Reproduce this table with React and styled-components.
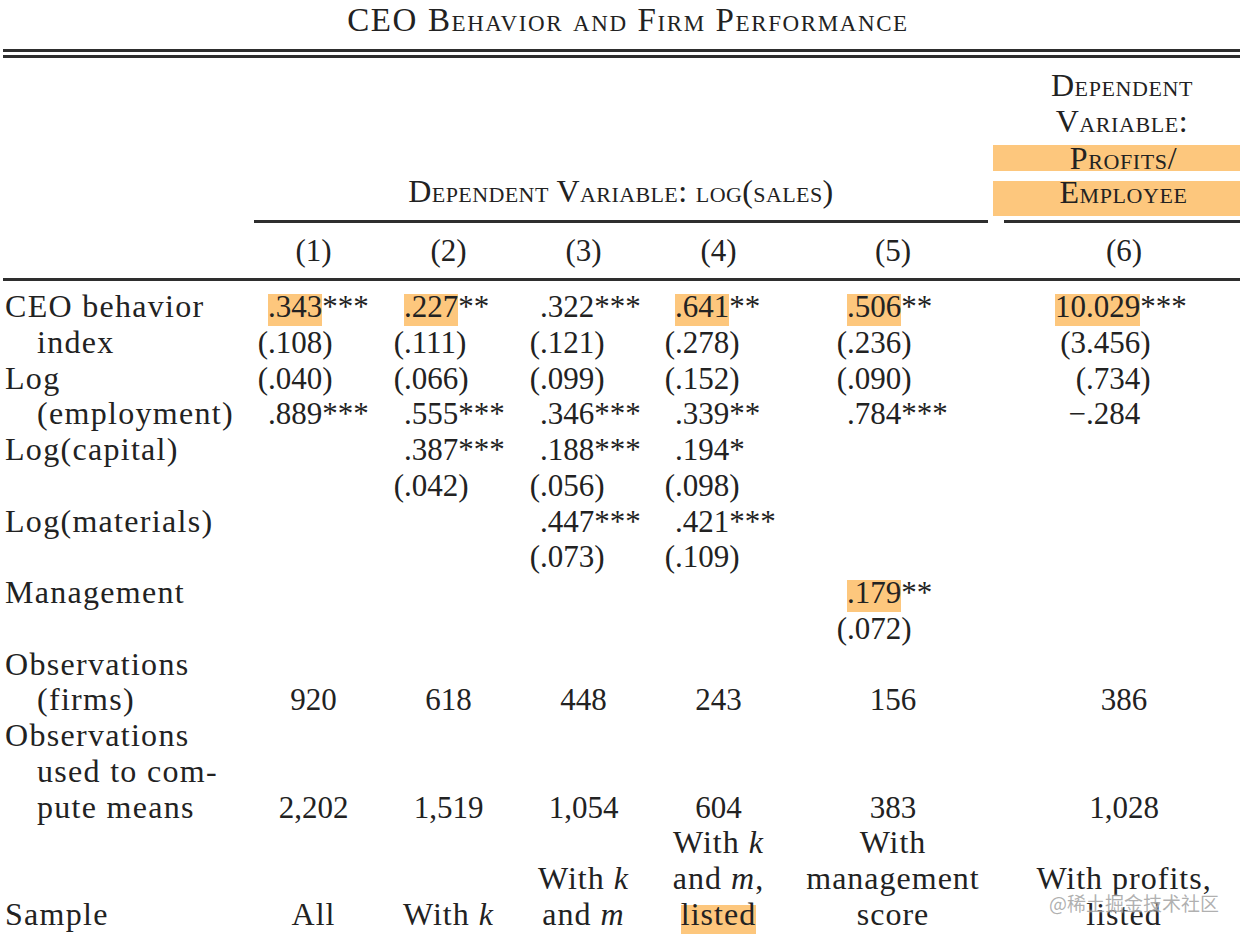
import React from 'react';
import styled, { createGlobalStyle } from 'styled-components';

const HL = '#fdc77d';
const INK = '#222';
const RULE = '#2e2e2e';
const COLS = '246px 135px 135px 135px 135px 214px 248px';
// x offset of the decimal point inside each column
const DOTS = [22, 23, 24, 24, 61, 86];
const LINE = 35.76;

const GlobalStyle = createGlobalStyle`
  html, body {
    margin: 0;
    padding: 0;
    background: #fff;
    overflow: hidden;
  }
  body {
    font-family: 'Liberation Serif', 'Times New Roman', serif;
    color: ${INK};
  }
`;

const Page = styled.div`
  position: relative;
  width: 1248px;
  height: 939px;
`;

const Title = styled.h1`
  margin: 0 0 9px;
  padding-left: 8px;
  width: 1240px;
  font-size: 33px;
  font-weight: normal;
  line-height: 40px;
  font-variant: small-caps;
  letter-spacing: 1.6px;
  text-align: center;
`;

const Rule = styled.div`
  height: 3px;
  margin-left: 3px;
  margin-top: ${(p) => p.$mt || 0}px;
  background: ${RULE};
`;

const HeadGrid = styled.div`
  display: grid;
  grid-template-columns: ${COLS};
`;

const SpanHead = styled.div`
  grid-column: 2 / span 5;
  align-self: end;
  margin: 0 12px 0 8px;
  padding-bottom: 11px;
  border-bottom: 3px solid ${RULE};
  font-size: 32px;
  line-height: 36px;
  font-variant: small-caps;
  letter-spacing: 0.4px;
  text-align: center;
`;

const SideHead = styled.div`
  grid-column: 7;
  display: flex;
  flex-direction: column;
  margin-left: 4px;
  padding-top: 9px;
  border-bottom: 3px solid ${RULE};
  font-size: 32px;
  font-variant: small-caps;
  letter-spacing: 0.6px;
  text-align: center;
`;

const HeadLine = styled.div`
  height: ${(p) => p.$h || 36}px;
  line-height: ${(p) => p.$lh || 36}px;
  margin-top: ${(p) => p.$mt || 0}px;
  margin-bottom: ${(p) => p.$mb || 0}px;
  margin-right: 8px;
  ${(p) =>
    p.$hl &&
    `
    background: ${HL};
    margin-left: -11px;
    margin-right: 0;
    padding-left: 6px;
  `}
`;

const NumHead = styled.div`
  padding: 10px 0 9px;
  font-size: 31px;
  line-height: 36px;
  text-align: center;
`;

const Body = styled.div`
  padding-top: 8px;
`;

const Line = styled.div`
  display: grid;
  grid-template-columns: ${COLS};
  height: ${LINE}px;
  line-height: ${LINE}px;
  white-space: nowrap;
`;

const Label = styled.div`
  padding-left: ${(p) => (p.$indent ? 37 : 5)}px;
  font-size: 32px;
  letter-spacing: 1.3px;
`;

const NumCell = styled.div`
  display: flex;
  font-size: 31px;
`;

const IntPart = styled.span`
  display: inline-block;
  width: ${(p) => p.$w}px;
  text-align: right;
`;

const Mark = styled.span`
  padding-bottom: 2px;
  background: linear-gradient(
    to bottom,
    transparent ${(p) => p.$top || 14}%,
    ${HL} ${(p) => p.$top || 14}%
  );
`;

const Count = styled.div`
  font-size: 31px;
  text-align: center;
`;

const TextCell = styled.div`
  font-size: 32px;
  letter-spacing: 1px;
  text-align: center;
`;

const Watermark = styled.div`
  position: absolute;
  left: 1049px;
  top: 891px;
  font-family: 'Noto Sans CJK SC', sans-serif;
  font-size: 19px;
  line-height: 24px;
  color: rgba(150, 150, 150, 0.75);
  text-shadow: 0 0 2px #fff;
`;

const n = (v, s = '', hl = false) => ({ v, s, hl });
const E = null;

const lines = [
  {
    label: 'CEO behavior',
    nums: [n('.343', '***', true), n('.227', '**', true), n('.322', '***'), n('.641', '**', true), n('.506', '**', true), n('10.029', '***', true)],
  },
  { label: 'index', indent: true, nums: [n('(.108)'), n('(.111)'), n('(.121)'), n('(.278)'), n('(.236)'), n('(3.456)')] },
  { label: 'Log', nums: [n('(.040)'), n('(.066)'), n('(.099)'), n('(.152)'), n('(.090)'), n('(.734)')] },
  {
    label: '(employment)',
    indent: true,
    nums: [n('.889', '***'), n('.555', '***'), n('.346', '***'), n('.339', '**'), n('.784', '***'), n('\u2212.284')],
  },
  { label: 'Log(capital)', nums: [E, n('.387', '***'), n('.188', '***'), n('.194', '*'), E, E] },
  { label: '', nums: [E, n('(.042)'), n('(.056)'), n('(.098)'), E, E] },
  { label: 'Log(materials)', nums: [E, E, n('.447', '***'), n('.421', '***'), E, E] },
  { label: '', nums: [E, E, n('(.073)'), n('(.109)'), E, E] },
  { label: 'Management', nums: [E, E, E, E, n('.179', '**', true), E] },
  { label: '', nums: [E, E, E, E, n('(.072)'), E] },
  { label: 'Observations' },
  { label: '(firms)', indent: true, counts: ['920', '618', '448', '243', '156', '386'] },
  { label: 'Observations' },
  { label: 'used to com-', indent: true },
  { label: 'pute means', indent: true, counts: ['2,202', '1,519', '1,054', '604', '383', '1,028'] },
  {
    label: '',
    texts: ['', '', '', <>With <i>k</i></>, 'With', ''],
  },
  {
    label: '',
    texts: ['', '', <>With <i>k</i></>, <>and <i>m</i>,</>, 'management', 'With profits,'],
  },
  {
    label: 'Sample',
    texts: ['All', <>With <i>k</i></>, <>and <i>m</i></>, <Mark $top={24}>listed</Mark>, 'score', 'listed'],
  },
];

const Num = ({ cell, dot }) => {
  if (!cell) return <NumCell />;
  const i = cell.v.indexOf('.');
  const whole = cell.v.slice(0, i);
  const frac = cell.v.slice(i);
  return (
    <NumCell>
      <IntPart $w={dot}>{cell.hl && whole ? <Mark>{whole}</Mark> : whole}</IntPart>
      <span>
        {cell.hl ? <Mark>{frac}</Mark> : frac}
        {cell.s}
      </span>
    </NumCell>
  );
};

const App = () => (
  <Page>
    <GlobalStyle />
    <Title>CEO Behavior and Firm Performance</Title>
    <Rule />
    <Rule $mt={3} />

    <HeadGrid>
      <SpanHead>Dependent Variable: log(sales)</SpanHead>
      <SideHead>
        <HeadLine>Dependent</HeadLine>
        <HeadLine>Variable:</HeadLine>
        <HeadLine $hl $mt={6} $h={26} $lh={26}>
          Profits/
        </HeadLine>
        <HeadLine $hl $mt={10} $h={35} $lh={22} $mb={4}>
          Employee
        </HeadLine>
      </SideHead>
    </HeadGrid>

    <HeadGrid>
      <div />
      {[1, 2, 3, 4, 5, 6].map((k) => (
        <NumHead key={k}>({k})</NumHead>
      ))}
    </HeadGrid>
    <Rule />

    <Body>
      {lines.map((line, r) => (
        <Line key={r}>
          <Label $indent={line.indent}>{line.label}</Label>
          {line.nums && line.nums.map((c, k) => <Num key={k} cell={c} dot={DOTS[k]} />)}
          {line.counts && line.counts.map((c, k) => <Count key={k}>{c}</Count>)}
          {line.texts && line.texts.map((t, k) => <TextCell key={k}>{t}</TextCell>)}
        </Line>
      ))}
    </Body>

    <Watermark>@稀土掘金技术社区</Watermark>
  </Page>
);

export default App;
